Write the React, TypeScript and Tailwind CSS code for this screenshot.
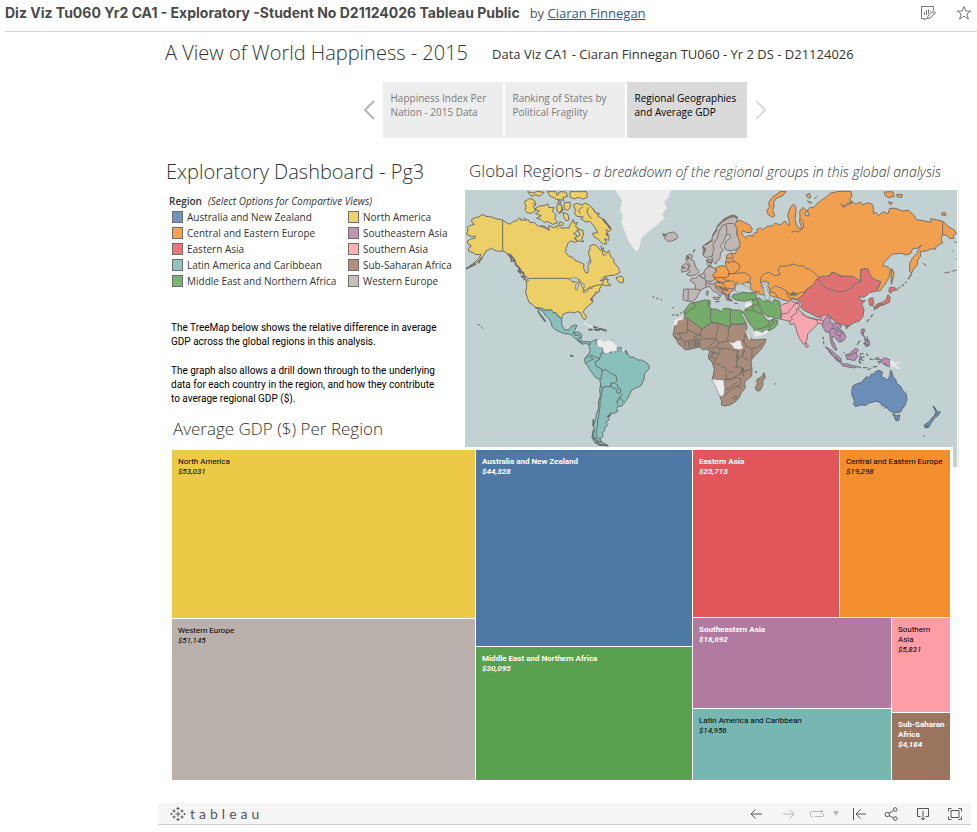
import React from "react";

const SANS = "font-['Open_Sans','Noto_Sans',sans-serif]";

const legend = [
  { name: "Australia and New Zealand", swatch: "bg-[#7194be]" },
  { name: "Central and Eastern Europe", swatch: "bg-[#f5a455]" },
  { name: "Eastern Asia", swatch: "bg-[#e77779]" },
  { name: "Latin America and Caribbean", swatch: "bg-[#91c5c1]" },
  { name: "Middle East and Northern Africa", swatch: "bg-[#7ab471]" },
  { name: "North America", swatch: "bg-[#f0d36c]" },
  { name: "Southeastern Asia", swatch: "bg-[#c094b3]" },
  { name: "Southern Asia", swatch: "bg-[#ffb0b7]" },
  { name: "Sub-Saharan Africa", swatch: "bg-[#b0917e]" },
  { name: "Western Europe", swatch: "bg-[#c7bfbb]" },
];

const stories = [
  { lines: ["Happiness Index Per", "Nation - 2015 Data"], active: false },
  { lines: ["Ranking of States by", "Political Fragility"], active: false },
  { lines: ["Regional Geographies", "and Average GDP"], active: true },
];

function WorldMap() {
  return (
    <svg
      viewBox="465 190 492 277"
      preserveAspectRatio="xMinYMin slice"
      className="block h-[277px] w-full bg-[#c2d1d2]"
      role="img"
      aria-label="World map coloured by region"
    >
      <path fill="#ececec" d="M615 190 L622 200 L620 210 L623 216 L621 222 L625 232 L629 242 L634 249 L637 252 L640 246 L641 238 L646 234 L650 230 L656 226 L660 222 L665 218 L662 215 L667 207 L664 203 L669 196 L671 190 Z" />

      {/* North America */}
      <g transform="translate(460 185) scale(0.33333)" fill="#edcf68" stroke="#6f6d67" strokeWidth="3" strokeLinejoin="round">
        <path d="M20 148 L24 135 L22 127 L32 121 L44 118 L36 112 L35 104 L46 98 L57 96 L66 88 L78 94 L95 96 L108 101 L128 105 L138 112 L150 118 L158 110 L168 108 L180 98 L183 106 L205 104 L210 113 L222 112 L235 124 L250 122 L262 130 L267 138 L266 122 L282 128 L294 120 L304 130 L318 128 L326 130 L331 118 L340 104 L342 115 L352 112 L346 124 L356 130 L348 141 L340 146 L350 150 L346 163 L354 168 L345 172 L332 168 L325 173 L318 190 L317 202 L326 213 L340 219 L345 226 L360 232 L372 238 L371 250 L377 263 L384 263 L384 242 L393 232 L390 218 L385 205 L390 192 L390 182 L402 178 L412 184 L421 196 L430 188 L431 198 L442 203 L446 196 L452 215 L460 221 L463 234 L475 248 L480 262 L465 270 L448 272 L432 275 L420 288 L433 284 L445 282 L442 292 L453 301 L436 302 L430 298 L423 306 L418 311 L420 318 L408 325 L398 336 L392 343 L398 352 L386 362 L373 374 L370 382 L378 392 L378 401 L373 404 L366 395 L361 382 L350 380 L343 384 L330 381 L316 385 L308 389 L305 402 L297 396 L288 383 L280 384 L274 375 L258 376 L245 370 L225 367 L216 357 L207 352 L201 335 L197 322 L200 308 L199 290 L205 288 L203 280 L193 271 L185 263 L181 250 L168 242 L166 230 L158 220 L148 210 L138 202 L128 198 L112 199 L101 194 L94 190 L78 198 L72 210 L64 220 L52 231 L36 240 L18 252 L45 231 L58 219 L63 208 L48 209 L37 202 L27 199 L25 190 L34 183 L24 177 L22 169 L32 162 L45 160 L46 153 L36 155 Z" />
        <path d="M193 50 L210 40 L224 47 L228 57 L220 66 L228 75 L216 84 L202 84 L195 76 L198 64 Z M224 72 L238 63 L252 62 L264 56 L266 67 L282 68 L277 78 L288 89 L284 103 L294 113 L278 118 L262 109 L252 113 L242 103 L230 100 L244 92 L226 86 L238 78 Z M290 62 L302 56 L307 68 L300 86 L291 78 Z M313 53 L330 51 L331 67 L321 77 L312 69 Z M309 82 L324 88 L327 105 L318 108 L311 95 Z M300 110 L312 116 L306 123 L298 119 Z M340 60 L352 55 L365 60 L376 54 L389 61 L399 71 L406 83 L419 86 L413 94 L426 100 L434 113 L449 123 L454 133 L448 140 L438 134 L447 155 L446 167 L434 160 L440 177 L427 176 L414 162 L404 157 L397 145 L413 143 L405 128 L398 118 L389 109 L378 111 L362 101 L370 96 L351 94 L343 84 L347 76 Z M330 20 L380 20 L382 36 L370 42 L354 37 L345 42 L330 37 Z M262 20 L288 20 L292 32 L299 20 L318 21 L323 34 L308 38 L313 46 L289 43 L279 36 L270 34 Z M203 20 L220 24 L233 19 L252 22 L240 34 L225 29 L215 35 Z M352 132 L369 136 L370 151 L364 163 L372 170 L356 168 L342 160 L360 151 Z M468 278 L484 273 L491 281 L489 294 L475 290 Z M296 45 L304 51 L293 55 Z" />
        <path fill="none" d="M128 105 V198 M205 280 H318 L333 283 L340 293 L357 283 L362 290 L372 318 L399 304 L413 300 L425 300 L435 277 L443 281" />
        <path fill="#c2d1d2" d="M328 282 L340 277 L355 281 L358 292 L346 290 L336 289 Z M348 295 L357 295 L352 316 L346 313 Z M361 292 L372 297 L373 310 L366 307 Z M368 321 L383 313 L386 317 L372 324 Z M386 308 L397 305 L396 311 Z" strokeWidth="2" />
        <path fill="none" strokeWidth="5" d="M143 207 L153 218 L155 229 L164 226 L168 240 L175 245 L180 257 L190 263 L192 273 L200 277 M149 207 L165 226 M173 256 L183 266 M183 272 L199 287 M67 217 L60 226 L55 235 M18 251 L48 237 M428 101 L438 112 L451 132 M438 145 L445 154 M392 340 L399 349" />
        <path fill="none" d="M190 98 L200 105 M240 123 L265 133 M287 124 L295 132 M303 57 L308 75 L296 84 M398 71 L414 90 M422 181 L430 211 L440 208 M389 225 L383 236 M396 341 L410 319 M369 65 L355 76 L361 86 M385 67 L381 83 L394 101 M312 73 L300 84 M226 63 L219 53 M52 418 L60 421 M62 424 L70 431" />
        <path fill="none" strokeWidth="4" d="M385 435 L395 434 M401 433 L412 436 L417 430 L431 436 M433 438 L440 436 M399 426 L411 429" />
        <path fill="none" stroke="#e9eded" d="M373 413 L381 418 M385 420 L394 424 L402 431" />
      </g>

      {/* Latin America */}
      <g transform="translate(540 300) scale(0.33333)" fill="#8ac0bb" stroke="#64706e" strokeWidth="3" strokeLinejoin="round">
        <path d="M-15 23 L5 25 L18 31 L34 30 L40 39 L48 38 L57 51 L65 57 L65 75 L75 91 L88 88 L93 80 L103 75 L111 76 L104 91 L100 98 L116 96 L126 104 L122 116 L129 126 L139 124 L151 126 L147 134 L137 130 L127 133 L116 121 L103 114 L96 106 L86 102 L73 101 L55 94 L44 88 L36 79 L34 67 L25 54 L15 45 L9 34 Z" />
        <path d="M150 129 L157 123 L167 120 L171 117 L168 128 L173 138 L187 144 L190 159 L201 160 L214 157 L221 151 L226 157 L231 144 L245 143 L254 151 L262 161 L270 172 L282 171 L292 180 L304 180 L321 189 L328 199 L326 209 L314 220 L312 237 L307 249 L302 258 L287 264 L275 270 L268 285 L260 299 L252 310 L244 319 L232 319 L230 326 L234 334 L223 340 L211 340 L212 348 L203 351 L208 359 L198 367 L202 377 L193 384 L195 391 L187 398 L189 409 L181 416 L183 425 L205 437 L180 436 L164 427 L156 413 L158 398 L164 389 L160 376 L167 359 L169 342 L176 325 L175 307 L181 288 L179 269 L182 253 L179 238 L168 233 L158 221 L148 207 L142 195 L135 189 L134 177 L141 166 L147 161 L151 151 L147 140 Z" />
        <path fill="none" d="M137 174 L149 169 L160 177 L145 184 L137 191 M149 165 L163 169 L178 177 L184 159 L193 159 M179 178 L166 185 L168 198 L185 207 L186 218 L182 240 M186 211 L199 209 L211 219 L228 227 L231 242 L225 250 L213 249 L211 260 L193 260 L188 266 L181 253 M213 250 L213 260 L229 268 L232 280 L241 279 L243 269 L234 264 L231 252 M247 282 L231 303 L233 314 M231 304 L241 294 L251 307 M188 266 L184 286 L180 304 L180 322 L177 342 L173 361 L173 379 L168 396 L171 415 L182 417 M232 145 L235 155 M246 143 L244 155 M97 101 L103 99 M106 99 L104 106 L119 105 M113 114 L125 113" />
        <path fill="none" strokeWidth="5" d="M160 357 L159 379 M161 388 L158 404 L163 416 L173 424 L186 426 M165 426 L179 434 L204 437 M-7 31 L2 46 L13 61 M2 45 L17 65 M112 120 L127 131 M146 89 L158 88 M164 88 L176 91 L182 86 L196 91 M90 166 L100 169 M203 352 L211 342 M257 151 L261 163" />
        <path fill="none" strokeWidth="4" d="M159 81 L173 82 M196 92 L200 90 M213 121 L218 121" />
        <path fill="#ececec" stroke="#d6dada" strokeWidth="2" d="M171 122 L182 118 L190 125 L215 121 L221 130 L229 136 L231 151 L220 155 L213 151 L206 159 L193 160 L189 143 L173 139 Z M246 143 L255 151 L247 155 Z" />
        <path fill="none" stroke="#e9eded" d="M133 70 L146 77 L158 84" />
      </g>

      {/* Europe, Russia and Asia */}
      <g transform="translate(640 185) scale(0.33333)" stroke="#77706a" strokeWidth="3" strokeLinejoin="round">
        <g fill="#f0a04e">
          <path d="M290 108 L300 106 L312 112 L328 119 L337 132 L332 143 L318 142 L308 137 L305 145 L316 158 L327 151 L339 154 L342 144 L352 143 L350 134 L362 128 L368 134 L382 124 L398 122 L404 115 L421 119 L435 108 L442 118 L449 123 L446 103 L443 91 L449 72 L460 57 L467 64 L468 80 L465 101 L469 118 L476 130 L486 130 L479 111 L480 94 L479 79 L489 67 L499 76 L496 91 L507 93 L502 75 L512 66 L520 69 L528 59 L541 48 L556 38 L572 24 L597 19 L633 19 L636 34 L628 45 L638 50 L619 57 L608 67 L640 52 L648 58 L660 51 L669 59 L684 53 L697 58 L701 73 L699 84 L709 83 L715 92 L729 80 L744 86 L749 70 L768 70 L786 78 L805 76 L823 92 L829 104 L849 107 L872 112 L872 101 L889 104 L909 109 L924 124 L942 135 L950 145 L939 151 L942 160 L929 161 L920 151 L909 149 L903 161 L908 174 L889 184 L886 193 L873 191 L862 197 L841 200 L842 214 L833 226 L832 239 L820 253 L814 265 L809 260 L809 235 L818 218 L831 205 L836 191 L845 180 L832 190 L819 190 L812 205 L799 210 L784 205 L758 207 L744 220 L732 233 L729 242 L745 246 L751 255 L748 275 L738 293 L728 307 L719 319 L711 315 L719 301 L721 290 L700 286 L688 277 L682 257 L663 252 L660 288 L641 283 L610 275 L580 263 L560 276 L540 280 L520 299 L500 313 L491 328 L475 346 L459 338 L447 348 L429 345 L414 338 L398 335 L389 329 L389 315 L383 302 L387 293 L377 288 L365 291 L363 300 L371 314 L375 331 L359 328 L340 320 L331 310 L332 294 L317 292 L303 300 L292 291 L285 303 L282 315 L273 319 L266 330 L258 333 L248 323 L235 312 L225 303 L222 294 L235 289 L221 277 L218 267 L229 260 L227 249 L243 242 L258 244 L256 230 L261 222 L259 212 L272 204 L285 207 L290 196 L301 184 L294 168 L292 150 L290 133 L284 121 Z" />
          <path d="M421 19 L438 20 L427 33 L409 40 L401 51 L402 65 L398 77 L405 92 L397 97 L384 88 L380 76 L388 68 L386 53 L396 38 L408 29 Z M733 21 L758 20 L763 34 L745 38 L735 31 Z M770 28 L787 29 L785 37 L772 36 Z M745 50 L758 54 L751 59 Z M755 250 L762 264 L758 286 L754 298 L753 279 Z M904 85 L916 82 L918 91 L906 91 Z M498 30 L509 25 L512 38 L505 39 Z" />
        </g>
        <path fill="none" d="M362 293 L362 278 L373 266 L388 262 L403 272 L421 269 L414 255 L421 243 L443 243 L461 237 L478 244 L489 241 L499 251 L510 253 L529 270 L541 279 M389 317 L404 302 L423 309 L439 318 L451 330 L469 330 L481 322 L499 322 L495 313 M414 338 L403 322 L389 321 M439 319 L446 337 L455 342 L470 344 M449 328 L460 322 L475 327 M908 109 V150 M258 244 L267 262 L265 275 L249 278 L221 277 M265 231 L284 230 L299 240 L298 252 L282 266 L264 265 M266 267 L298 264 L314 263 L332 275 L331 286 L318 294 M257 219 L276 220 L285 231 M256 230 L270 235 M274 206 L280 219 M248 280 L263 288 L281 289 L287 303 M234 289 L250 293 L251 300 M239 310 L253 309 L280 311 M252 301 L242 291 M254 300 L258 314 L266 316 M227 303 L246 306 L247 323 M249 292 L268 286" />
        <path fill="none" strokeWidth="5" d="M228 290 L243 294 M238 304 L250 313 L263 317 M249 321 L258 331 M451 329 L467 327 M456 322 L466 331" />
        <path fill="none" d="M345 318 L361 321 M481 101 L489 110 L492 129 M463 139 L454 141 M489 129 L474 142 L464 136 M513 57 L502 48 L517 53 M522 42 L532 33 M601 57 L613 63 M943 169 L953 175 M936 196 L939 200 M950 219 L953 227 M913 264 L929 261 M935 259 L950 255 M848 234 L860 243" />

        <g fill="#beb7b5">
          <path d="M189 210 L190 194 L187 184 L199 176 L215 168 L218 150 L227 137 L231 125 L242 114 L251 102 L267 94 L280 90 L292 96 L291 108 L284 120 L291 130 L290 147 L299 169 L300 181 L289 194 L270 197 L257 194 L252 184 L258 168 L272 157 L266 147 L258 153 L250 171 L240 184 L250 194 L241 207 L240 221 L231 229 L227 237 L219 230 L215 213 L205 217 L196 217 Z" />
          <path d="M68 146 L79 148 L86 144 L101 141 L113 151 L110 162 L94 168 L84 170 L76 162 Z" />
          <path d="M139 214 L149 207 L158 212 L153 224 L161 227 L168 247 L178 260 L169 269 L149 273 L139 268 L151 261 L143 250 L151 244 L145 235 L138 226 Z M126 243 L137 235 L147 241 L143 257 L125 262 Z" />
          <path d="M130 321 L131 313 L145 312 L166 313 L166 298 L150 286 L156 279 L167 280 L177 270 L189 266 L197 252 L208 244 L225 250 L228 260 L218 270 L225 282 L236 289 L223 295 L227 303 L226 307 L237 321 L248 326 L241 335 L232 324 L218 317 L210 305 L200 306 L185 313 L178 322 L170 339 L158 350 L140 348 L129 344 Z" />
          <path d="M200 224 L213 222 L216 231 L209 244 L202 238 Z M256 332 L269 327 L267 343 L275 348 L260 345 Z M219 337 L239 337 L235 344 L223 343 Z M201 317 L205 319 L203 332 L198 328 Z" />
        </g>
        <path fill="none" d="M217 213 L221 193 L219 177 L232 160 L237 139 L247 122 L260 116 L281 115 M258 153 L261 136 L258 118 M145 316 L144 347 M166 312 L182 315 M177 272 L189 279 L199 288 L196 300 L200 306 M191 263 L197 272 L192 282 M197 288 L216 289 L224 281 M199 294 L218 299 L224 296 M202 244 L216 244" />
        <path fill="none" strokeWidth="5" d="M190 207 L196 194 L190 185 M196 180 L218 164 M219 150 L231 133 M232 124 L248 108 L264 99 L283 93 L291 99 M139 213 L148 218 L140 224 M126 246 L136 250 M69 150 L80 151 M201 227 L214 235 M266 329 L263 340 L277 348" />
        <path fill="none" strokeWidth="4" d="M160 202 L165 193 M226 350 L239 349 M38 335 L43 337 M49 339 L55 342 M62 343 L66 345 M283 355 L293 355" />
        <path fill="#c2d1d2" stroke="#7b8585" strokeWidth="2" d="M286 315 L287 304 L297 295 L311 300 L323 305 L335 316 L342 321 L325 324 L307 321 L291 325 Z M368 300 L378 293 L387 297 L379 307 L384 319 L390 331 L388 346 L375 344 L373 326 L370 311 Z" />

        <path fill="#df7174" d="M470 345 L491 328 L500 314 L520 299 L530 282 L545 274 L570 273 L575 262 L588 265 L601 275 L622 273 L640 275 L650 282 L664 290 L662 275 L662 256 L672 250 L684 252 L690 268 L700 282 L723 290 L716 300 L712 318 L699 320 L685 327 L671 337 L657 335 L662 347 L676 347 L665 357 L672 374 L669 394 L660 407 L640 414 L627 423 L613 420 L595 416 L584 409 L567 394 L555 390 L535 398 L513 386 L492 376 L482 367 L486 355 Z" />
        <path fill="none" d="M533 280 L546 299 L567 313 L598 321 L618 318 L635 309 L643 297 L664 290" />
        <path fill="#df7174" d="M686 342 L698 338 L701 349 L699 363 L689 360 Z M751 306 L764 308 L773 314 L760 317 L750 325 L746 316 Z M744 329 L751 337 L748 352 L735 358 L719 362 L711 371 L703 367 L710 358 L730 351 L740 342 Z M617 423 L626 424 L619 432 Z M669 432 L674 433 L670 447 L665 443 Z" />
        <path fill="none" strokeWidth="4" d="M701 366 L705 376 M710 369 L717 361 L729 360 M776 311 L780 306 M785 303 L791 299 M795 295 L799 290 M804 283 L815 267 M698 388 L692 397 M688 403 L680 410" />
        <path fill="none" stroke="#e9e1e2" strokeWidth="6" d="M687 332 L692 326 M687 334 L682 340 M664 405 L669 410" />
      </g>

      {/* Africa, Middle East and Southern Asia */}
      <g transform="translate(660 280) scale(0.33333)" stroke="#6f6f67" strokeWidth="3" strokeLinejoin="round">
        <g fill="#73ad69">
          <path d="M71 95 L80 83 L89 71 L101 68 L115 65 L134 60 L149 61 L151 72 L147 79 L155 87 L172 88 L184 95 L191 85 L204 85 L221 90 L238 90 L248 94 L244 104 L251 115 L259 132 L212 133 L211 142 L175 130 L155 128 L126 147 L76 111 Z" />
          <path d="M215 51 L221 43 L235 43 L250 37 L265 40 L284 38 L290 48 L288 58 L273 59 L255 63 L238 62 L225 59 Z" />
          <path d="M264 72 L275 65 L279 59 L291 57 L298 53 L309 64 L325 62 L337 68 L343 58 L359 64 L361 79 L365 92 L361 107 L363 117 L343 116 L335 109 L323 110 L313 101 L304 92 L309 103 L319 119 L329 123 L338 118 L353 122 L352 133 L341 145 L329 151 L316 151 L301 160 L286 158 L280 144 L266 128 L258 112 L249 98 L256 90 L259 83 Z" />
        </g>
        <path fill="none" d="M102 68 L107 80 L91 90 L75 102 M149 61 L143 74 L153 85 L151 115 L155 128 M211 87 V134 M257 91 L279 91 L301 101 L307 104 M275 76 L290 73 L303 88 M263 82 L278 77 L282 90 M291 57 L297 73 L303 80 M330 123 L324 137 L305 145 L290 148 M337 118 L341 130 L329 138 L329 151" />
        <g fill="#a98b79">
          <path d="M54 113 L76 111 L126 147 L155 128 L175 130 L211 142 L212 133 L259 132 L261 145 L258 152 L266 164 L275 178 L285 180 L318 177 L316 187 L304 207 L290 222 L277 235 L273 246 L276 266 L275 288 L262 299 L254 307 L256 323 L244 338 L237 354 L224 367 L209 375 L193 378 L184 375 L185 363 L179 347 L165 316 L156 298 L160 285 L163 267 L156 246 L147 237 L145 224 L151 215 L140 207 L128 210 L119 201 L101 205 L88 208 L75 209 L65 199 L54 190 L50 178 L39 166 L42 151 L45 137 L40 130 Z" />
          <path d="M312 278 L316 291 L309 302 L308 318 L299 333 L290 332 L286 323 L292 311 L290 299 L304 291 Z" />
        </g>
        <path fill="none" d="M83 118 L83 158 L46 161 M83 150 L124 168 M126 147 L119 166 L105 169 L100 178 M58 161 L63 177 L45 177 M63 177 L74 182 L77 195 L70 204 M76 186 L93 181 L98 204 M101 180 L106 203 M95 181 L107 176 L122 179 L119 201 M119 168 L130 177 L166 175 L171 156 L175 131 M166 175 L160 188 L148 199 L142 207 M169 176 L175 189 L204 183 M205 139 V164 L202 181 M204 181 L217 187 L251 184 L254 168 L261 154 M251 168 L264 171 L276 179 M251 183 L259 199 L274 206 L294 202 L308 188 M276 207 V235 M251 201 L254 213 L246 229 M177 190 L171 201 L151 205 M151 215 L165 217 M171 200 L181 211 L172 230 L167 243 L157 247 M179 207 L204 205 L218 211 L231 211 L234 229 L229 240 L231 263 L221 261 M163 253 L177 252 L184 260 L196 262 L198 272 L219 278 M232 234 L246 229 L267 242 M247 229 L251 210 M232 259 L249 263 L252 275 L275 267 M247 263 L251 289 M198 278 V295 L211 298 L228 289 L247 278 M163 298 L190 300 L211 298 M192 300 L193 329 L206 326 L220 316 L231 306 M212 298 L229 292 L243 297 L239 316 L228 320 M189 347 L193 330 M180 347 L193 347 L210 332 L229 319 L243 325 M218 353 L228 347 L231 353 L224 359 L218 353 M159 221 L171 218 M158 217 L155 231 L167 238 M154 224 L147 239" />
        <path fill="none" strokeWidth="4" d="M42 170 L51 174 M86 186 L89 206 M107 179 L108 201 M113 178 L115 200 M234 209 L230 231 L238 240 M245 263 L244 282 M285 274 L291 278 M344 311 L347 312 M37 104 L43 105 M48 106 L56 105 M61 100 L65 98 M37 82 L41 84" />
        <g fill="#ececec" stroke="#d6dada" strokeWidth="2">
          <path d="M53 113 L71 109 L67 119 L54 121 L50 134 L38 136 L43 123 Z M209 186 L219 190 L233 182 L243 184 L243 193 L249 204 L238 208 L224 205 Z M157 299 L190 301 L193 329 L189 347 L180 347 L169 323 Z M280 154 L293 153 L306 159 L320 149 L325 157 L310 164 L290 170 L282 166 Z M258 68 L274 66 L276 74 L261 83 L253 79 Z M257 151 L264 158 L272 176 L267 178 Z" />
        </g>
        <g fill="#faa6b1" stroke="#857176">
          <path d="M360 80 L369 73 L384 68 L391 61 L401 66 L416 68 L419 79 L414 88 L425 97 L429 105 L444 111 L462 116 L475 119 L485 116 L486 106 L501 104 L513 108 L507 120 L499 129 L500 138 L491 132 L474 130 L468 138 L455 150 L443 161 L441 179 L436 190 L430 193 L421 179 L412 161 L408 144 L403 131 L391 134 L388 124 L377 121 L363 117 L366 101 Z" />
          <path d="M437 188 L445 195 L444 202 L436 200 Z" />
        </g>
        <path fill="none" stroke="#857176" d="M367 102 L384 99 L391 88 L398 82 L403 72 L418 69 M388 123 L397 119 L394 110 L411 98 L408 88 L418 83 M425 98 L442 112 L471 120 L473 130 M477 119 L488 123 L499 119 M501 105 L509 114" />
      </g>

      {/* Southeastern Asia and Oceania */}
      <g transform="translate(800 280) scale(0.33333)" stroke="#756f76" strokeWidth="3" strokeLinejoin="round">
        <g fill="#b88eb1">
          <path d="M66 135 L72 120 L81 109 L91 113 L91 125 L100 131 L112 129 L125 138 L119 146 L130 156 L138 170 L131 182 L119 187 L111 181 L103 170 L96 169 L97 181 L104 193 L111 209 L106 211 L97 199 L91 180 L89 157 L77 156 L71 145 Z" />
          <path d="M81 203 L94 211 L109 224 L123 236 L124 249 L112 243 L100 230 L90 218 Z M123 251 L142 252 L159 257 L173 260 L161 264 L141 260 L127 257 Z M137 225 L149 221 L160 210 L168 204 L175 210 L169 220 L173 229 L164 242 L151 239 L141 238 Z M235 236 L246 241 L252 233 L270 239 L270 261 L258 257 L248 249 L243 244 Z M185 147 L192 149 L190 164 L183 161 Z M191 189 L207 181 L209 195 L199 201 Z" />
        </g>
        <path fill="none" d="M87 156 L94 146 L102 145 L98 135 M102 145 L111 151 L105 163 M112 140 L115 153 L130 158 L119 166 L108 165 M120 166 L120 182 M98 192 L104 190 M138 224 L149 227 L165 218 L171 219" />
        <path fill="none" strokeWidth="4" d="M180 221 L191 221 M181 224 L180 234 L190 243 M183 234 L193 229 M179 234 L178 247 L184 249 M199 220 L204 228 M209 237 L219 239 M194 172 L195 181 L205 178 M201 169 L202 184 M187 164 L194 171 M180 181 L171 195 M193 189 L206 197 M107 230 L112 239 L122 246 M86 211 L98 227 M175 261 L183 262 M188 263 L202 263 M203 270 L213 264 M219 261 L232 259 M70 170 L69 178 M70 184 L72 193 M76 199 L82 208 M236 239 L229 236 M232 245 L241 246 L238 252 M223 238 L236 232 M251 252 L259 254 M132 217 L133 220" />
        <path fill="#ebe4ec" stroke="#e1dfe4" strokeWidth="2" d="M271 239 L285 247 L290 257 L301 266 L291 266 L280 258 L271 261 Z M294 244 L301 251 L290 250 Z" />
        <g fill="#6a8eb8" stroke="#626b75">
          <path d="M158 318 L169 312 L185 307 L193 297 L200 289 L206 294 L215 281 L223 284 L226 275 L237 271 L248 276 L244 289 L255 295 L264 300 L270 286 L271 270 L277 279 L280 292 L287 298 L290 310 L302 319 L308 331 L319 342 L321 358 L316 374 L307 387 L302 396 L285 399 L271 394 L263 387 L262 379 L254 385 L256 373 L247 379 L241 368 L228 364 L207 369 L198 376 L180 375 L166 380 L161 373 L163 361 L155 344 L156 330 Z" />
          <path d="M281 403 L290 407 L299 404 L297 420 L289 423 L284 414 Z M400 380 L408 388 L412 395 L421 395 L416 405 L407 412 L403 405 L408 397 Z M401 408 L404 415 L395 427 L386 442 L376 444 L373 435 L386 426 L394 416 Z" />
        </g>
        <path fill="none" stroke="#5f666b" strokeWidth="4" d="M399 378 L407 388 M404 405 L410 399 M374 437 L384 440 M278 401 L281 407 M370 467 L373 468" />
      </g>
    </svg>
  );
}

type TileProps = { name: string; value: string; color: string; light?: boolean };

function Tile({ name, value, color, light }: TileProps) {
  return (
    <button
      type="button"
      className={`flex h-full w-full min-w-0 flex-col items-start py-[7px] pr-1 pl-[6px] text-left font-['Roboto',sans-serif] text-[8px] leading-[10px] ${color} ${
        light ? "font-bold text-white" : "font-normal text-black"
      }`}
    >
      <span>{name}</span>
      <em>{value}</em>
    </button>
  );
}

function TreeMap() {
  return (
    <div className="grid h-[330px] grid-cols-[303fr_216fr_257fr] gap-px bg-white">
      <div className="grid grid-rows-[168fr_161fr] gap-px">
        <Tile name="North America" value="$53,031" color="bg-[#edc948]" />
        <Tile name="Western Europe" value="$51,145" color="bg-[#bab0ac]" />
      </div>
      <div className="grid grid-rows-[196fr_133fr] gap-px">
        <Tile name="Australia and New Zealand" value="$44,328" color="bg-[#4e79a7]" light />
        <Tile name="Middle East and Northern Africa" value="$30,095" color="bg-[#59a14f]" light />
      </div>
      <div className="grid grid-rows-[167fr_162fr] gap-px">
        <div className="grid grid-cols-[146fr_110fr] gap-px">
          <Tile name="Eastern Asia" value="$25,713" color="bg-[#e15759]" light />
          <Tile name="Central and Eastern Europe" value="$19,298" color="bg-[#f28e2b]" />
        </div>
        <div className="grid grid-cols-[198fr_58fr] gap-px">
          <div className="grid grid-rows-[90fr_71fr] gap-px">
            <Tile name="Southeastern Asia" value="$18,692" color="bg-[#b07aa1]" light />
            <Tile name="Latin America and Caribbean" value="$14,956" color="bg-[#76b7b2]" />
          </div>
          <div className="grid grid-rows-[94fr_67fr] gap-px">
            <Tile name="Southern Asia" value="$5,831" color="bg-[#ff9da7]" />
            <Tile name="Sub-Saharan Africa" value="$4,184" color="bg-[#9c755f]" light />
          </div>
        </div>
      </div>
    </div>
  );
}

function Line({ d, label }: { d: string; label: string }) {
  return (
    <svg viewBox="0 0 16 16" width="16" height="16" fill="none" stroke="currentColor" strokeWidth="1" aria-label={label}>
      <path d={d} />
    </svg>
  );
}

function TableauLogo() {
  return (
    <a href="#tableau" className="flex items-center gap-1 text-[#555]" aria-label="tableau">
      <svg viewBox="0 0 16 16" width="16" height="16" fill="none" stroke="currentColor" strokeWidth="1">
        <path d="M8 5.5v5M5.5 8h5M8 1v3M6.5 2.5h3M8 12v3M6.5 13.500h3M4 3.500v3M2.500 5h3M12 3.500v3M10.500 5h3M4 9.500v3M2.500 11h3M12 9.500v3M10.500 11h3M1.500 7v2M.5 8h2M14.500 7v2M13.500 8h2" />
      </svg>
      <span className="flex gap-1 font-['Lato',sans-serif] text-[14px] leading-4">
        {["t", "a", "b", "l", "e", "a", "u"].map((c, i) => (
          <span key={i}>{c}</span>
        ))}
      </span>
    </a>
  );
}

function Toolbar() {
  return (
    <footer className="flex h-[22px] items-center justify-between border-b border-[#cfcfcf] bg-[#f5f5f5] pr-2 pl-3">
      <TableauLogo />
      <div className="flex items-center gap-4 text-[#555]">
        <button type="button" aria-label="Undo"><Line label="Undo" d="M13 8H2M6.500 3.500L2 8l4.500 4.500" /></button>
        <button type="button" aria-label="Redo" className="text-[#b8b8b8]"><Line label="Redo" d="M2 8h11M8.500 3.500L13 8l-4.500 4.500" /></button>
        <div className="-mr-1 flex items-center gap-2 text-[#b8b8b8]">
          <button type="button" aria-label="Replay" className="-ml-1">
            <Line label="Replay" d="M4 10.500H2.500a1 1 0 0 1-1-1v-3a1 1 0 0 1 1-1h11M11.500 3.500l2 2-2 2M14.500 7.500v2a1 1 0 0 1-1 1H6" />
          </button>
          <button type="button" aria-label="Replay speed">
            <svg viewBox="0 0 6 5" width="6" height="5" fill="currentColor" aria-hidden="true"><path d="M0 0h6L3 5z" /></svg>
          </button>
        </div>
        <button type="button" aria-label="Reset"><Line label="Reset" d="M2.500 2v12M15 8H5M9.500 3.500L5 8l4.500 4.500" /></button>
        <button type="button" aria-label="Share"><Line label="Share" d="M6.500 8.500a2.200 2.200 0 1 1-4.400 0a2.200 2.200 0 1 1 4.400 0M14 3.500a1.800 1.800 0 1 1-3.600 0a1.800 1.800 0 1 1 3.600 0M14 12.500a1.800 1.800 0 1 1-3.600 0a1.800 1.800 0 1 1 3.600 0M6 7.500L10.500 4.500M6 9.500L10.500 12" /></button>
        <button type="button" aria-label="Download"><Line label="Download" d="M5.500 10.500h-3v-8h11v8h-3M8 5v9M5.800 11.800L8 14l2.200-2.200" /></button>
        <button type="button" aria-label="Full screen"><Line label="Full screen" d="M4 4.500h8v7H4zM1.500 5.500v-3h3M11.500 2.500h3v3M14.500 10.500v3h-3M4.500 13.500h-3v-3" /></button>
      </div>
    </footer>
  );
}

export default function App() {
  return (
    <div className={`min-h-screen bg-white text-[#333] ${SANS}`}>
      <header className="ml-[5px] flex h-8 items-center justify-between border-b border-[#d4d4d4] pr-[5px] pb-[6px]">
        <div className="flex items-baseline gap-[10px] whitespace-nowrap">
          <h1 className="font-['Inter',sans-serif] text-[14px] leading-5 font-bold text-[#4a4a4a]">
            Diz Viz Tu060 Yr2 CA1 - Exploratory -Student No D21124026 Tableau Public
          </h1>
          <span className="text-[13px] leading-5 text-[#555]">
            by{" "}
            <a href="#author" className="text-[#2b5c8c] underline">Ciaran Finnegan</a>
          </span>
        </div>
        <div className="flex items-center gap-5 text-[#777]">
          <button type="button" aria-label="Edit">
            <Line label="Edit" d="M7.500 13.500H6l-2 1.500v-1.500H1.500v-12h12v4M4.500 10V7M6.500 10V5M8.500 9V4.500M10.500 7V6M7.500 13.500l.5-2.500 5.500-5 2 2-5.500 5zM12.500 7l2 2" />
          </button>
          <button type="button" aria-label="Favourite">
            <Line label="Favourite" d="M8 1.500L9.800 6h5L10.800 9l1.600 5.200L8 11.200 3.600 14.200 5.200 9 1.200 6h5z" />
          </button>
        </div>
      </header>

      <main className="mr-[6px] ml-[158px]">
        <div className="flex h-[50px] items-center gap-6 pb-2 pl-[7px] whitespace-nowrap">
          <h2 className="text-[20px] leading-7 font-light">A View of World Happiness - 2015</h2>
          <p className="pt-[2px] text-[13px] leading-5">Data Viz CA1 - Ciaran Finnegan TU060 - Yr 2 DS - D21124026</p>
        </div>

        <nav className="flex items-center justify-center gap-2" aria-label="Story points">
          <button type="button" aria-label="Previous" className="text-[#b4b4b4]">
            <svg viewBox="0 0 12 20" width="12" height="20" fill="none" stroke="currentColor" strokeWidth="2"><path d="M11 1L2 10l9 9" /></svg>
          </button>
          <div className="flex gap-[2px]">
            {stories.map((s) => (
              <button
                type="button"
                key={s.lines[0]}
                className={`h-14 w-30 px-2 pt-[9px] pb-[19px] text-left text-[10px] leading-[14px] whitespace-nowrap ${
                  s.active ? "bg-[#dadada] text-black" : "bg-[#ededed] text-[#7a7a7a]"
                }`}
              >
                {s.lines[0]}
                <br />
                {s.lines[1]}
              </button>
            ))}
          </div>
          <button type="button" aria-label="Next" className="text-[#dcdcdc]">
            <svg viewBox="0 0 12 20" width="12" height="20" fill="none" stroke="currentColor" strokeWidth="2"><path d="M1 1l9 9-9 9" /></svg>
          </button>
        </nav>

        <div className="mr-3 grid grid-cols-[307px_1fr] pt-[18px]">
          <section className="pl-2">
            <h2 className="text-[20px] leading-8 font-light whitespace-nowrap">Exploratory Dashboard - Pg3</h2>
            <div className="flex items-baseline gap-[6px] pt-[5px] pl-[3px] text-[10px] leading-4 whitespace-nowrap">
              <h3 className="font-semibold">Region</h3>
              <em>(Select Options for Compartive Views)</em>
            </div>
            <ul className="grid w-[284px] grid-flow-col grid-cols-[176px_1fr] grid-rows-5 pl-[6px] text-[10px] leading-4">
              {legend.map((l) => (
                <li key={l.name}>
                  <button type="button" className="flex items-center gap-1 whitespace-nowrap">
                    <span className={`h-3 w-[11px] border border-[#706c68] ${l.swatch}`} />
                    {l.name}
                  </button>
                </li>
              ))}
            </ul>
            <div className="pt-[32px] pl-[5px] font-['Roboto',sans-serif] text-[10px] leading-[14px] whitespace-nowrap text-black">
              <p>
                The TreeMap below shows the relative difference in average
                <br />
                GDP across the global regions in this analysis.
              </p>
              <p className="pt-[15px]">
                The graph also allows a drill down through to the underlying
                <br />
                data for each country in the region, and how they contribute
                <br />
                to average regional GDP ($).
              </p>
            </div>
            <h2 className="pt-[9px] pl-[7px] text-[17px] leading-7 font-light whitespace-nowrap">Average GDP ($) Per Region</h2>
          </section>

          <section className="min-w-0">
            <h2 className="flex h-[34px] items-baseline gap-[2px] pl-1 text-[17px] leading-[30px] font-light whitespace-nowrap">
              Global Regions <span className="text-[14px]">- <em>a breakdown of the regional groups in this global analysis</em></span>
            </h2>
            <div className="border-r border-[#e4e4e4] pr-px">
              <WorldMap />
            </div>
          </section>
        </div>

        <section className="relative -mt-5 mr-[18px] bg-white pt-[3px] pr-[3px] pb-[23px] pl-[14px]" aria-label="Average GDP per region">
          <TreeMap />
        </section>

        <Toolbar />
      </main>
    </div>
  );
}
